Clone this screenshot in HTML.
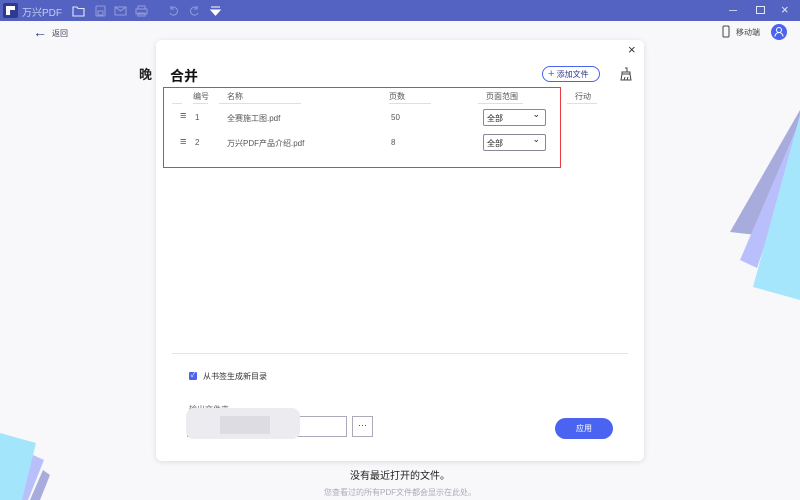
<!DOCTYPE html>
<html><head><meta charset="utf-8"><style>
*{margin:0;padding:0;box-sizing:border-box}
body{width:800px;height:500px;overflow:hidden;background:#f8f8fb;font-family:"Liberation Sans","Noto Sans CJK SC",sans-serif;position:relative;color:#333}
.tb{position:absolute;left:0;top:0;width:800px;height:21px;background:#5462c2;color:#c8cdef;font-size:10px}
.abs{position:absolute;white-space:nowrap}
.modal{position:absolute;left:156px;top:40px;width:488px;height:421px;background:#fff;border-radius:6px;box-shadow:0 1px 6px rgba(0,0,0,.12)}
.th{position:absolute;top:91px;font-size:8px;color:#555;border-bottom:1px solid #dde;height:13px;white-space:nowrap}
.cell{position:absolute;font-size:8px;color:#555;white-space:nowrap}
.sel{position:absolute;left:483px;width:63px;height:17px;border:1px solid #889;border-radius:2px;font-size:8px;padding:3px 3px;color:#222}
.sel:after{content:"⌄";position:absolute;right:5px;top:-1px;font-size:9px}
</style></head><body>
<div class="tb">
 <div class="abs" style="left:3px;top:3px;width:15px;height:15px;background:#2f3a8c;border-radius:2px"><div class="abs" style="left:3px;top:3px;width:9px;height:9px;background:#fff;clip-path:polygon(0 0,100% 0,100% 45%,45% 45%,45% 100%,0 100%)"></div></div>
 <div class="abs" style="left:22px;top:4px">万兴PDF</div>
 <svg class="abs" style="left:70px;top:4px" width="160" height="14" fill="none" stroke="#c0c6ec" stroke-width="1.1">
  <path d="M3 3h4l1 1.5h6v7.5H3z" stroke="#e4e7f7"/>
  <rect x="26" y="2" width="9" height="10" rx="1" stroke="#8f99d6"/><rect x="28" y="7" width="5" height="4" stroke="#8f99d6"/>
  <rect x="45" y="3" width="11" height="8" stroke="#8f99d6"/><path d="M45 3l5.5 4 5.5-4" stroke="#8f99d6"/>
  <rect x="66" y="5" width="11" height="5" stroke="#8f99d6"/><rect x="68" y="2" width="7" height="3" stroke="#8f99d6"/><rect x="68" y="9" width="7" height="3" stroke="#8f99d6"/>
  <path d="M101 4a4 4 0 1 1-1 5M101 2v3h3" stroke="#8f99d6"/><path d="M127 4a4 4 0 1 0 1 5M127 2v3h-3" stroke="#8f99d6"/>
  <path d="M141 3h9M141 6h9l-4.5 5z" fill="#fff" stroke="#fff"/>
 </svg>
 <div class="abs" style="left:729px;top:10px;width:8px;height:1px;background:#c8cdef"></div>
 <div class="abs" style="left:756px;top:6px;width:9px;height:8px;border:1px solid #e4e7f7"></div>
 <div class="abs" style="left:781px;top:2px;font-size:13px;color:#e4e7f7">×</div>
</div>
<div class="abs" style="left:33px;top:24px;font-size:14px;color:#2f3a8c">←</div>
<div class="abs" style="left:52px;top:28px;font-size:8px;color:#445">返回</div>
<svg class="abs" style="left:721px;top:25px" width="10" height="13"><rect x="2" y="1" width="6" height="11" rx="1" fill="none" stroke="#444"/></svg>
<div class="abs" style="left:736px;top:27px;font-size:8px;color:#444">移动端</div>
<div class="abs" style="left:771px;top:24px;width:16px;height:16px;border-radius:50%;background:#4a63f0"><svg width="16" height="16" fill="none" stroke="#fff"><circle cx="8" cy="6" r="2.5"/><path d="M4 12.5a4 4 0 0 1 8 0"/></svg></div>
<div class="abs" style="left:139px;top:64px;font-size:13px;font-weight:bold;color:#222">晚</div>
<svg class="abs" style="left:0;top:0" width="800" height="500">
 <polygon points="730,232 800,110 800,240" fill="#a7acdc"/>
 <polygon points="740,260 757,268 800,140 800,120" fill="#b9bffa"/>
 <polygon points="753,287 800,300 800,115" fill="#a6e6fc"/>
 <polygon points="43,470 50,475 40,500 30,500" fill="#a7acdc"/>
 <polygon points="33,455 44,460 28,500 15,500" fill="#b9bffa"/>
 <polygon points="0,433 36,443 22,500 0,500" fill="#a3e6fc"/>
</svg>
<div class="abs" style="left:350px;top:467px;font-size:10px;color:#222">没有最近打开的文件。</div>
<div class="abs" style="left:324px;top:487px;font-size:8px;color:#aab">您查看过的所有PDF文件都会显示在此处。</div>
<div class="modal"></div>
<div class="abs" style="left:628px;top:42px;font-size:13px;color:#333">×</div>
<div class="abs" style="left:170px;top:66px;font-size:14px;font-weight:bold;color:#111">合并</div>
<div class="abs" style="left:542px;top:66px;width:58px;height:16px;border:1px solid #4a63f0;border-radius:9px;font-size:8px;color:#2f3a8c;padding:2px 0 0 5px"><span style="color:#4a63f0;font-size:11px;line-height:9px">+</span> 添加文件</div>
<svg class="abs" style="left:619px;top:67px" width="14" height="14" fill="none" stroke="#444" stroke-width="1"><path d="M6 1h2v4M3 5h8v2H3zM3 7l-1 6h10l-1-6M5 13l1-3M8 13l1-3"/></svg>
<div class="abs" style="left:163px;top:87px;width:398px;height:81px;border:1.5px solid #ec3b40"></div>
<div class="th" style="left:172px;width:10px"></div>
<div class="th" style="left:193px;width:15px">编号</div>
<div class="th" style="left:219px;width:82px;padding-left:8px">名称</div>
<div class="th" style="left:389px;width:42px">页数</div>
<div class="th" style="left:478px;width:45px;padding-left:8px">页面范围</div>
<div class="th" style="left:567px;width:30px;padding-left:8px">行动</div>
<div class="cell" style="left:180px;top:111px;font-size:11px;line-height:10px">≡</div>
<div class="cell" style="left:195px;top:113px">1</div>
<div class="cell" style="left:227px;top:113px">全赛施工图.pdf</div>
<div class="cell" style="left:391px;top:113px">50</div>
<div class="sel" style="top:109px">全部</div>
<div class="cell" style="left:180px;top:137px;font-size:11px;line-height:10px">≡</div>
<div class="cell" style="left:195px;top:138px">2</div>
<div class="cell" style="left:227px;top:138px">万兴PDF产品介绍.pdf</div>
<div class="cell" style="left:391px;top:138px">8</div>
<div class="sel" style="top:134px">全部</div>
<div class="abs" style="left:172px;top:353px;width:456px;height:1px;background:#e4e4e8"></div>
<div class="abs" style="left:189px;top:372px;width:8px;height:8px;background:#4a63f0;border-radius:1px;color:#fff;font-size:7px;line-height:8px;text-align:center">✓</div>
<div class="abs" style="left:203px;top:371px;font-size:8px;color:#333">从书签生成新目录</div>
<div class="abs" style="left:189px;top:404px;font-size:8px;color:#666">输出文件夹</div>
<div class="abs" style="left:187px;top:416px;width:160px;height:21px;border:1px solid #aab;background:#fff"></div>
<div class="abs" style="left:186px;top:408px;width:114px;height:31px;background:#ececf0;border-radius:8px"></div>
<div class="abs" style="left:220px;top:416px;width:50px;height:18px;background:#dcdce2"></div>
<div class="abs" style="left:352px;top:416px;width:21px;height:21px;border:1px solid #aab;font-size:9px;text-align:center;line-height:16px">···</div>
<div class="abs" style="left:555px;top:418px;width:58px;height:21px;border-radius:11px;background:#4a63f0;color:#fff;font-size:8px;text-align:center;line-height:21px">应用</div>
</body></html>
